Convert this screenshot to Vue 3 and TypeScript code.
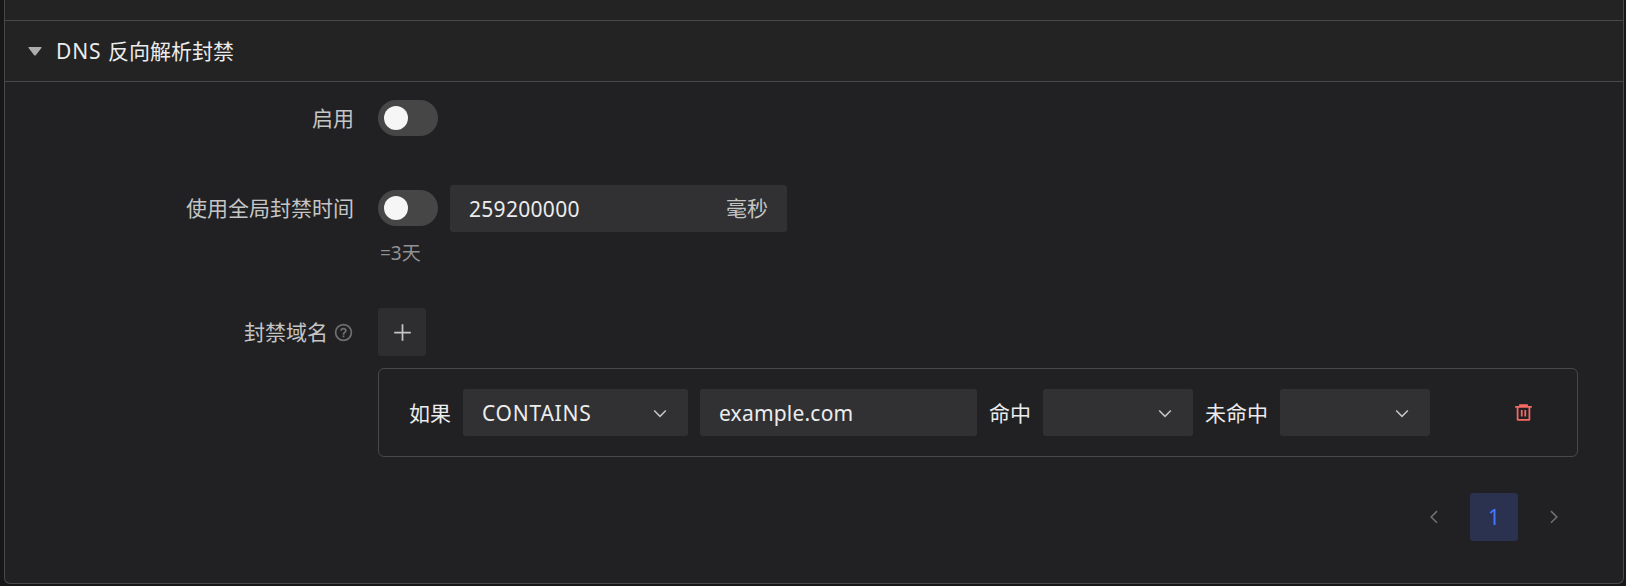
<script setup lang="ts">
import { ref } from 'vue'

const enabled = ref(false)
const useGlobalTime = ref(false)
const duration = ref('259200000')
const domain = ref('example.com')
</script>

<template>
  <div class="page">
    <section class="collapse">
      <div class="previous"></div>
      <header class="header">
        <svg class="caret" width="14" height="9" viewBox="0 0 14 9"><path d="M1 0h12q1 0 .4 1L8 8q-1 1-2 0L.6 1Q0 0 1 0z" /></svg>
        <span class="title"><span class="latin">DNS </span>反向解析封禁</span>
      </header>
      <div class="content">
        <div class="row enable-row">
          <label class="label">启用</label>
          <button class="switch" :class="{ on: enabled }" role="switch" @click="enabled = !enabled"><i></i></button>
        </div>
        <div class="row time-row">
          <label class="label">使用全局封禁时间</label>
          <button class="switch" :class="{ on: useGlobalTime }" role="switch" @click="useGlobalTime = !useGlobalTime"><i></i></button>
          <div class="field duration">
            <input v-model="duration" class="digits" />
            <span class="unit">毫秒</span>
          </div>
        </div>
        <div class="extra">=3天</div>
        <div class="row domain-row">
          <label class="label">
            <span>封禁域名</span>
            <svg class="help" width="21" height="21" viewBox="0 0 48 48" fill="none" stroke="currentColor" stroke-width="4">
              <path d="M42 24c0 9.941-8.059 18-18 18S6 33.941 6 24 14.059 6 24 6s18 8.059 18 18Z" />
              <path d="M24.006 31v4.008m0-6.008L24 28c0-3 3-4 4.780-6.402C30.558 19.195 28.288 15 23.987 15c-4.014 0-5.382 2.548-5.388 4.514v.465" />
            </svg>
          </label>
          <button class="add">
            <svg width="21" height="21" viewBox="0 0 48 48" fill="none" stroke="currentColor" stroke-width="4"><path d="M5 24h38M24 5v38" /></svg>
          </button>
        </div>
        <div class="rule">
          <span class="word first">如果</span>
          <div class="field select operator">
            <span class="operator-text">CONTAINS</span>
            <svg class="chevron" width="18" height="18" viewBox="0 0 48 48"><path d="M39.6 17.443 24.043 33 8.487 17.443" /></svg>
          </div>
          <div class="field domain"><input v-model="domain" class="domain-text" /></div>
          <span class="word">命中</span>
          <div class="field select result">
            <svg class="chevron" width="18" height="18" viewBox="0 0 48 48"><path d="M39.6 17.443 24.043 33 8.487 17.443" /></svg>
          </div>
          <span class="word">未命中</span>
          <div class="field select result">
            <svg class="chevron" width="18" height="18" viewBox="0 0 48 48"><path d="M39.6 17.443 24.043 33 8.487 17.443" /></svg>
          </div>
          <button class="delete">
            <svg width="21" height="21" viewBox="0 0 48 48" fill="none" stroke="currentColor" stroke-width="4">
              <path d="M5 11h5.500m0 0v29a1 1 0 0 0 1 1h25a1 1 0 0 0 1-1V11m-27 0H16m21.500 0H43m-5.500 0H32m-16 0V7h16v4m-16 0h16M20 18v15m8-15v15" />
            </svg>
          </button>
        </div>
        <nav class="pagination">
          <button class="arrow">
            <svg width="18" height="18" viewBox="0 0 48 48"><path d="M32 8.400 16.444 23.956 32 39.513" /></svg>
          </button>
          <button class="current">1</button>
          <button class="arrow">
            <svg width="18" height="18" viewBox="0 0 48 48"><path d="m16 39.513 15.556-15.557L16 8.400" /></svg>
          </button>
        </nav>
      </div>
    </section>
  </div>
</template>

<style>
body {
  margin: 0;
  background: #17171a;
}
</style>

<style scoped>
* {
  box-sizing: border-box;
}
.page {
  height: 586px;
  padding: 0 2px 2px 4px;
  overflow: hidden;
  background: #17171a;
  color: #ececec;
  font: 21px/32px "Noto Sans", "Noto Sans CJK SC", sans-serif;
}
.collapse {
  height: 584px;
  border: 1px solid #484849;
  border-top: 0;
  border-radius: 0 0 6px 6px;
  background: #212123;
  overflow: hidden;
}
button {
  border: 0;
  padding: 0;
  font: inherit;
}
.previous {
  height: 21px;
  border-bottom: 1px solid #484849;
  background: #232324;
}
.header {
  display: flex;
  align-items: center;
  height: 61px;
  padding-left: 23px;
  border-bottom: 1px solid #484849;
  background: #232324;
}
.caret {
  fill: #adadae;
}
.title {
  margin-left: 14px;
}
.latin {
  letter-spacing: 0.9px;
}
.content {
  padding-top: 12px;
}
.row {
  display: flex;
  align-items: center;
  height: 48px;
}
.label {
  display: flex;
  align-items: center;
  justify-content: flex-end;
  width: 349px;
  margin-right: 24px;
  color: #c5c5c5;
}
.enable-row {
  margin-bottom: 42px;
}
.switch {
  width: 60px;
  height: 36px;
  padding: 6px;
  border-radius: 18px;
  background: #464647;
}
.switch i {
  display: block;
  width: 24px;
  height: 24px;
  border-radius: 50%;
  background: #f6f6f6;
}
.switch.on {
  background: #3c7eff;
}
.switch.on i {
  margin-left: 24px;
}
.field {
  display: flex;
  align-items: center;
  flex: none;
  height: 47px;
  padding: 0 19px;
  border-radius: 3px;
  background: #313133;
}
.field input {
  min-width: 0;
  flex: 1;
  padding: 1px 0 0;
  border: 0;
  outline: 0;
  background: transparent;
  color: inherit;
  font: inherit;
}
.duration {
  width: 337px;
  margin-left: 12px;
}
.field .digits {
  letter-spacing: 0.3px;
}
.field .domain-text {
  letter-spacing: 0.2px;
}
.operator-text {
  letter-spacing: 0.75px;
}
.unit {
  color: #c5c5c5;
}
.extra {
  height: 30px;
  margin: 6px 0 40px 375px;
  color: #929293;
  font-size: 19px;
  line-height: 30px;
}
.help {
  margin: 0 0 0 5px;
  color: #6e6e6f;
}
.add {
  display: flex;
  align-items: center;
  justify-content: center;
  width: 48px;
  height: 48px;
  border-radius: 3px;
  background: #2e2e30;
  color: #c5c5c5;
}
.rule {
  display: flex;
  align-items: center;
  width: 1200px;
  height: 89px;
  margin: 12px 0 0 373px;
  padding-left: 30px;
  border: 1px solid #484849;
  border-radius: 6px;
}
.word {
  margin: 0 12px;
  white-space: nowrap;
}
.word.first {
  margin-left: 0;
}
.select {
  justify-content: flex-end;
}
.operator {
  width: 225px;
  margin-right: 12px;
  justify-content: space-between;
}
.domain {
  width: 277px;
}
.result {
  width: 150px;
}
.chevron,
.arrow svg {
  fill: none;
  stroke: #c5c5c5;
  stroke-width: 4;
}
.delete {
  display: flex;
  margin-left: 83px;
  background: transparent;
  color: #f76965;
}
.pagination {
  display: flex;
  justify-content: flex-end;
  gap: 12px;
  margin: 36px 45px 0 0;
}
.arrow,
.current {
  display: flex;
  align-items: center;
  justify-content: center;
  width: 48px;
  height: 48px;
  border-radius: 3px;
  background: transparent;
}
.arrow svg {
  stroke: #727273;
}
.current {
  background: #2a3250;
  color: #4776ff;
}
</style>
